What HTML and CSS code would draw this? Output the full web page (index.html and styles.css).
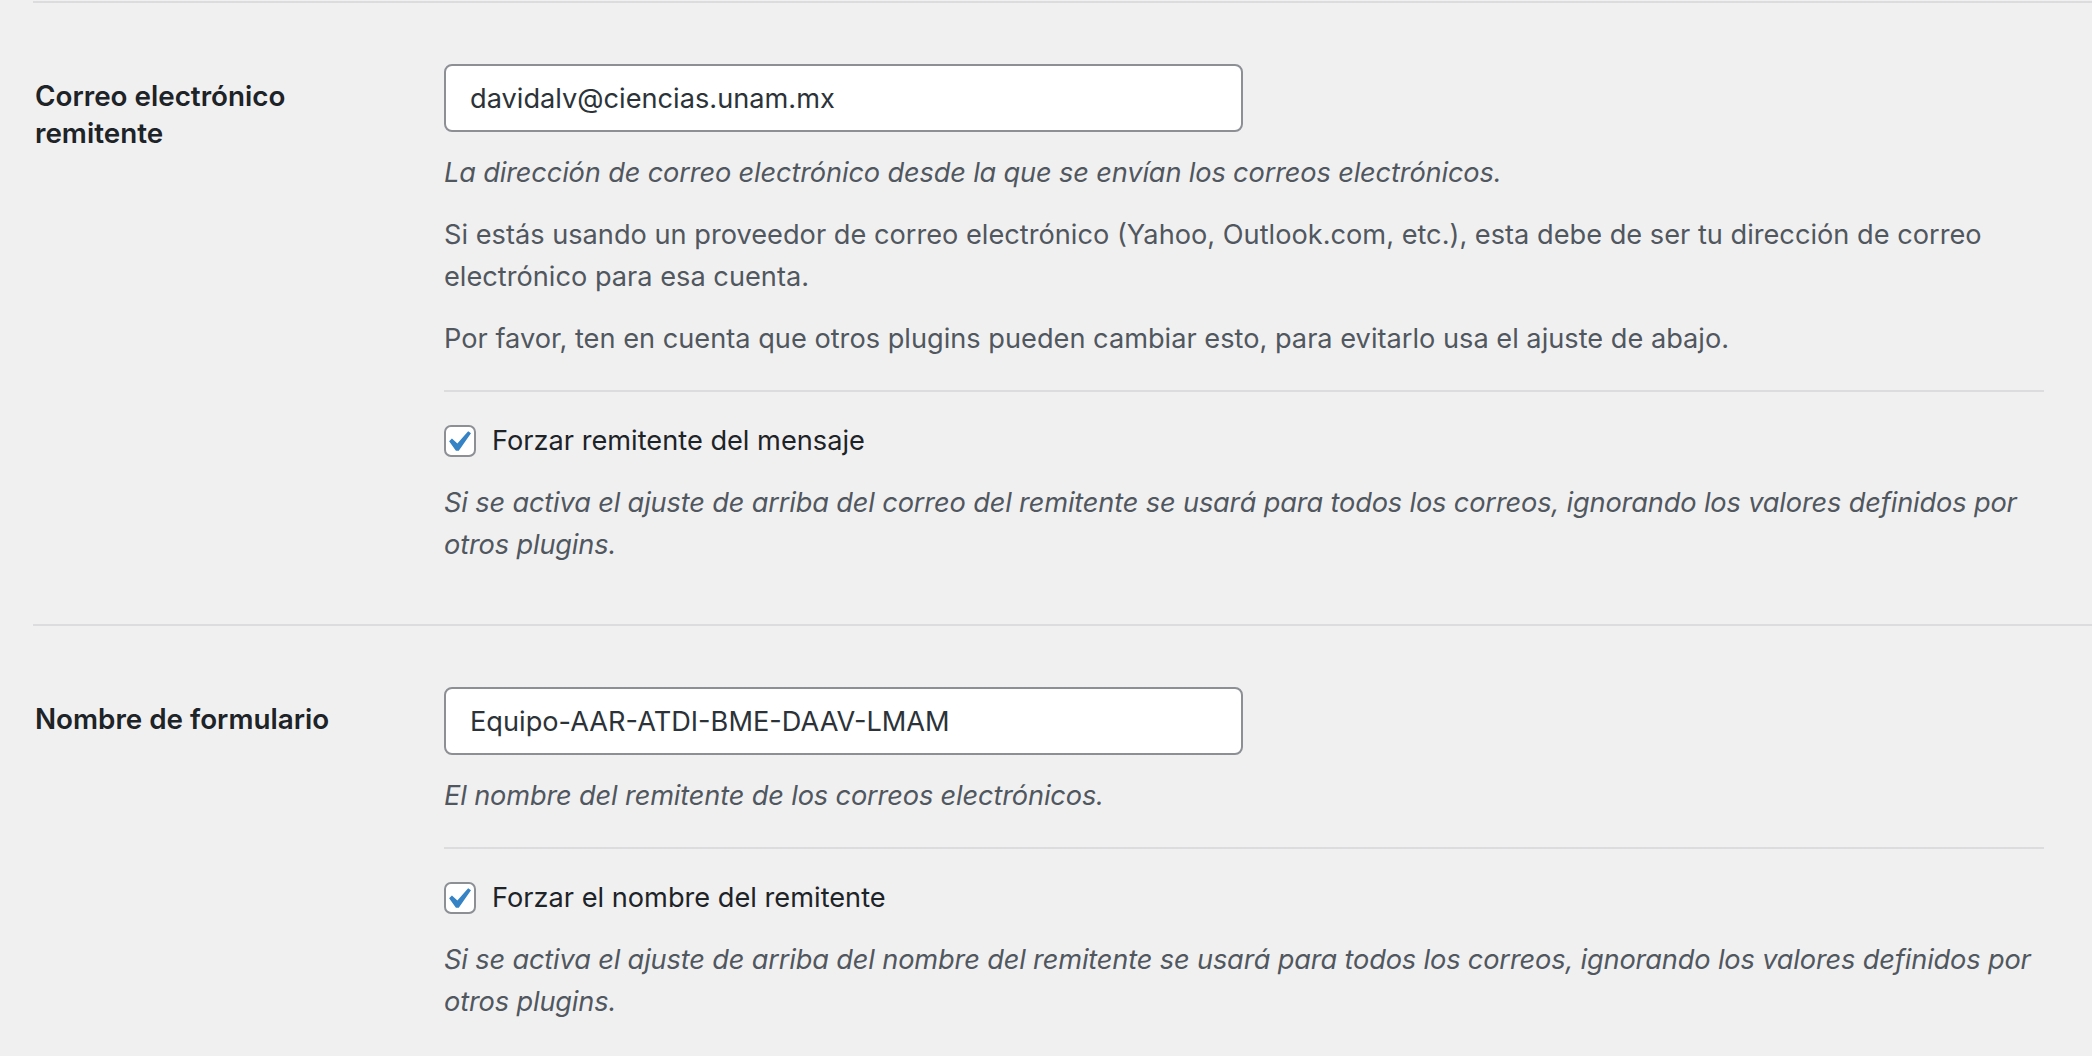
FILE: index.html
```html
<!DOCTYPE html>
<html lang="es">
<head>
<meta charset="utf-8">
<title>Ajustes</title>
<link rel="stylesheet" href="styles.css">
</head>
<body>
<div class="table">
  <div class="row">
    <div class="th"><label for="from-email">Correo electrónico remitente</label></div>
    <div class="td">
      <input id="from-email" class="text" type="text" value="davidalv@ciencias.unam.mx">
      <p class="desc">La dirección de correo electrónico desde la que se envían los correos electrónicos.</p>
      <p class="note">Si estás usando un proveedor de correo electrónico (Yahoo, Outlook.com, etc.), esta debe de ser tu dirección de correo electrónico para esa cuenta.</p>
      <p class="note">Por favor, ten en cuenta que otros plugins pueden cambiar esto, para evitarlo usa el ajuste de abajo.</p>
      <hr class="sep">
      <label class="check">
        <span class="box"><svg viewBox="4.3 2.9 13.3 13.3" width="28" height="28"><path d="M14.83 4.89l1.34.94-5.81 8.38H9.02L5.78 9.67l1.34-1.25 2.58 2.27z" fill="#3582c4"/></svg></span>
        <span>Forzar remitente del mensaje</span>
      </label>
      <p class="desc">Si se activa el ajuste de arriba del correo del remitente se usará para todos los correos, ignorando los valores definidos por otros plugins.</p>
    </div>
  </div>
  <div class="row">
    <div class="th"><label for="from-name">Nombre de formulario</label></div>
    <div class="td">
      <input id="from-name" class="text" type="text" value="Equipo-AAR-ATDI-BME-DAAV-LMAM">
      <p class="desc">El nombre del remitente de los correos electrónicos.</p>
      <hr class="sep">
      <label class="check">
        <span class="box"><svg viewBox="4.3 2.9 13.3 13.3" width="28" height="28"><path d="M14.83 4.89l1.34.94-5.81 8.38H9.02L5.78 9.67l1.34-1.25 2.58 2.27z" fill="#3582c4"/></svg></span>
        <span>Forzar el nombre del remitente</span>
      </label>
      <p class="desc">Si se activa el ajuste de arriba del nombre del remitente se usará para todos los correos, ignorando los valores definidos por otros plugins.</p>
    </div>
  </div>
</div>
</body>
</html>
```
FILE: styles.css
```css
html, body {
  margin: 0;
  padding: 0;
  background: #f0f0f1;
  overflow: hidden;
}
body {
  font-family: Inter, "Noto Sans", sans-serif;
  font-size: 27.2px;
  color: #50575e;
  padding-left: 33px;
  padding-top: 1px;
}
.table {
  border-top: 2px solid #dcdcde;
}
.row {
  display: grid;
  grid-template-columns: 411px 1fr;
  border-bottom: 2px solid #dcdcde;
}
.th {
  padding-top: 75px;
  padding-left: 2px;
}
.th label {
  display: block;
  font-weight: 600;
  font-size: 27.8px;
  color: #1d2327;
  line-height: 37px;
  width: 320px;
}
.td {
  padding: 61px 48px 58px 0;
}
.text {
  display: block;
  box-sizing: border-box;
  width: 799px;
  height: 68px;
  margin: 0;
  padding: 0 24px;
  border: 2px solid #8c8f94;
  border-radius: 8px;
  background: #fff;
  font-family: inherit;
  font-size: 27.2px;
  color: #2c3338;
  outline: none;
}
p {
  margin: 0;
  line-height: 42px;
}
.desc {
  font-style: italic;
  letter-spacing: -0.15px;
  margin-top: 20px;
}
.note {
  margin-top: 20px;
}
.sep {
  border: 0;
  border-top: 2px solid #dcdcde;
  margin: 30px 0 0;
}
.check {
  display: flex;
  align-items: center;
  gap: 16px;
  margin-top: 32px;
  color: #1d2327;
  line-height: 34px;
}
.box {
  box-sizing: border-box;
  flex: none;
  width: 32px;
  height: 32px;
  border: 2px solid #8c8f94;
  border-radius: 7px;
  background: #fff;
  display: flex;
  align-items: center;
  justify-content: center;
  overflow: hidden;
}
.box svg {
  flex: none;
  display: block;
}
.check + .desc {
  margin-top: 24px;
}
```
